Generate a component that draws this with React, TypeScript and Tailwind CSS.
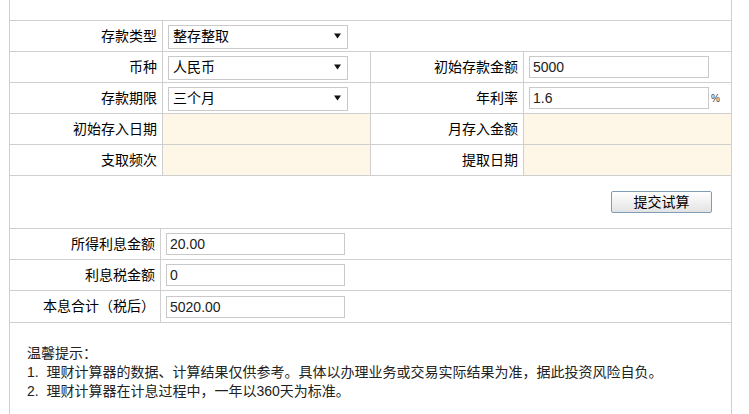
import * as React from "react"

const font = "font-['Liberation_Sans','Noto_Sans_CJK_SC',sans-serif]"

function Arrow() {
  return (
    <svg className="pointer-events-none absolute right-[7px] top-1/2 -translate-y-1/2" width="7" height="6" viewBox="0 0 7 6">
      <path d="M0 0.5h7L3.5 5.5z" fill="#111" />
    </svg>
  )
}

function Select({ value, options }: { value: string; options: string[] }) {
  return (
    <div className="relative ml-[5px] h-[24px] w-[180px]">
      <select
        defaultValue={value}
        className="h-full w-full appearance-none border border-[#c9c9c9] bg-white pl-[4px] text-[14px] text-black outline-none"
      >
        {options.map((o) => (
          <option key={o}>{o}</option>
        ))}
      </select>
      <Arrow />
    </div>
  )
}

function Field({ value, w = "w-[180px]" }: { value: string; w?: string }) {
  return (
    <input
      readOnly
      defaultValue={value}
      className={`ml-[5px] h-[22px] ${w} border border-[#c9c9c9] bg-white px-[3px] text-[14px] text-[#222] outline-none`}
    />
  )
}

function Label({ text, w }: { text: string; w: string }) {
  return (
    <div className={`flex h-full ${w} shrink-0 items-center justify-end border-r border-[#cfcfcf] pr-[5px] text-[14px] text-black`}>
      {text}
    </div>
  )
}

export default function App() {
  return (
    <div className={`${font} min-h-[414px] bg-white`}>
      <div className="ml-[9px] w-[723px] border-x border-[#cfcfcf]">
        {/* top header strip */}
        <div className="h-[21px] border-b border-[#cfcfcf]" />

        <div className="flex h-[31px] border-b border-[#cfcfcf]">
          <Label text="存款类型" w="w-[153px]" />
          <div className="flex flex-1 items-center">
            <Select value="整存整取" options={["整存整取", "零存整取", "整存零取", "存本取息"]} />
          </div>
        </div>

        <div className="flex h-[31px] border-b border-[#cfcfcf]">
          <Label text="币种" w="w-[153px]" />
          <div className="flex h-full w-[208px] items-center border-r border-[#cfcfcf]">
            <Select value="人民币" options={["人民币", "美元", "欧元"]} />
          </div>
          <Label text="初始存款金额" w="w-[153px]" />
          <div className="flex flex-1 items-center">
            <Field value="5000" />
          </div>
        </div>

        <div className="flex h-[31px] border-b border-[#cfcfcf]">
          <Label text="存款期限" w="w-[153px]" />
          <div className="flex h-full w-[208px] items-center border-r border-[#cfcfcf]">
            <Select value="三个月" options={["三个月", "半年", "一年", "两年", "三年", "五年"]} />
          </div>
          <Label text="年利率" w="w-[153px]" />
          <div className="flex flex-1 items-center">
            <Field value="1.6" />
            <span className="ml-[2px] text-[10px] text-[#333]">%</span>
          </div>
        </div>

        <div className="flex h-[31px] border-b border-[#cfcfcf]">
          <Label text="初始存入日期" w="w-[153px]" />
          <div className="h-full w-[208px] border-r border-[#cfcfcf] bg-[#fef7e8]" />
          <Label text="月存入金额" w="w-[153px]" />
          <div className="h-full flex-1 bg-[#fef7e8]" />
        </div>

        <div className="flex h-[31px] border-b border-[#cfcfcf]">
          <Label text="支取频次" w="w-[153px]" />
          <div className="h-full w-[208px] border-r border-[#cfcfcf] bg-[#fef7e8]" />
          <Label text="提取日期" w="w-[153px]" />
          <div className="h-full flex-1 bg-[#fef7e8]" />
        </div>

        <div className="flex h-[53px] items-center justify-end border-b border-[#cfcfcf] pr-[19px]">
          <button className="h-[22px] w-[101px] rounded-[2px] border border-[#7f9db9] bg-gradient-to-b from-white to-[#e3e3e3] text-[14px] text-black">
            提交试算
          </button>
        </div>

        {/* results */}
        <div className="flex h-[31px] border-b border-[#cfcfcf]">
          <Label text="所得利息金额" w="w-[151px]" />
          <div className="flex flex-1 items-center">
            <Field value="20.00" w="w-[179px]" />
          </div>
        </div>
        <div className="flex h-[31px] border-b border-[#cfcfcf]">
          <Label text="利息税金额" w="w-[151px]" />
          <div className="flex flex-1 items-center">
            <Field value="0" w="w-[179px]" />
          </div>
        </div>
        <div className="flex h-[32px] border-b border-[#cfcfcf]">
          <Label text="本息合计（税后）" w="w-[151px]" />
          <div className="flex flex-1 items-center">
            <Field value="5020.00" w="w-[179px]" />
          </div>
        </div>

        {/* notes */}
        <div className="pb-[30px] pl-[17px] pt-[21px] text-[14px] leading-[19px] text-[#222]">
          <p>温馨提示：</p>
          <p>1.&nbsp; 理财计算器的数据、计算结果仅供参考。具体以办理业务或交易实际结果为准，据此投资风险自负。</p>
          <p>2.&nbsp; 理财计算器在计息过程中，一年以360天为标准。</p>
        </div>
      </div>
    </div>
  )
}
